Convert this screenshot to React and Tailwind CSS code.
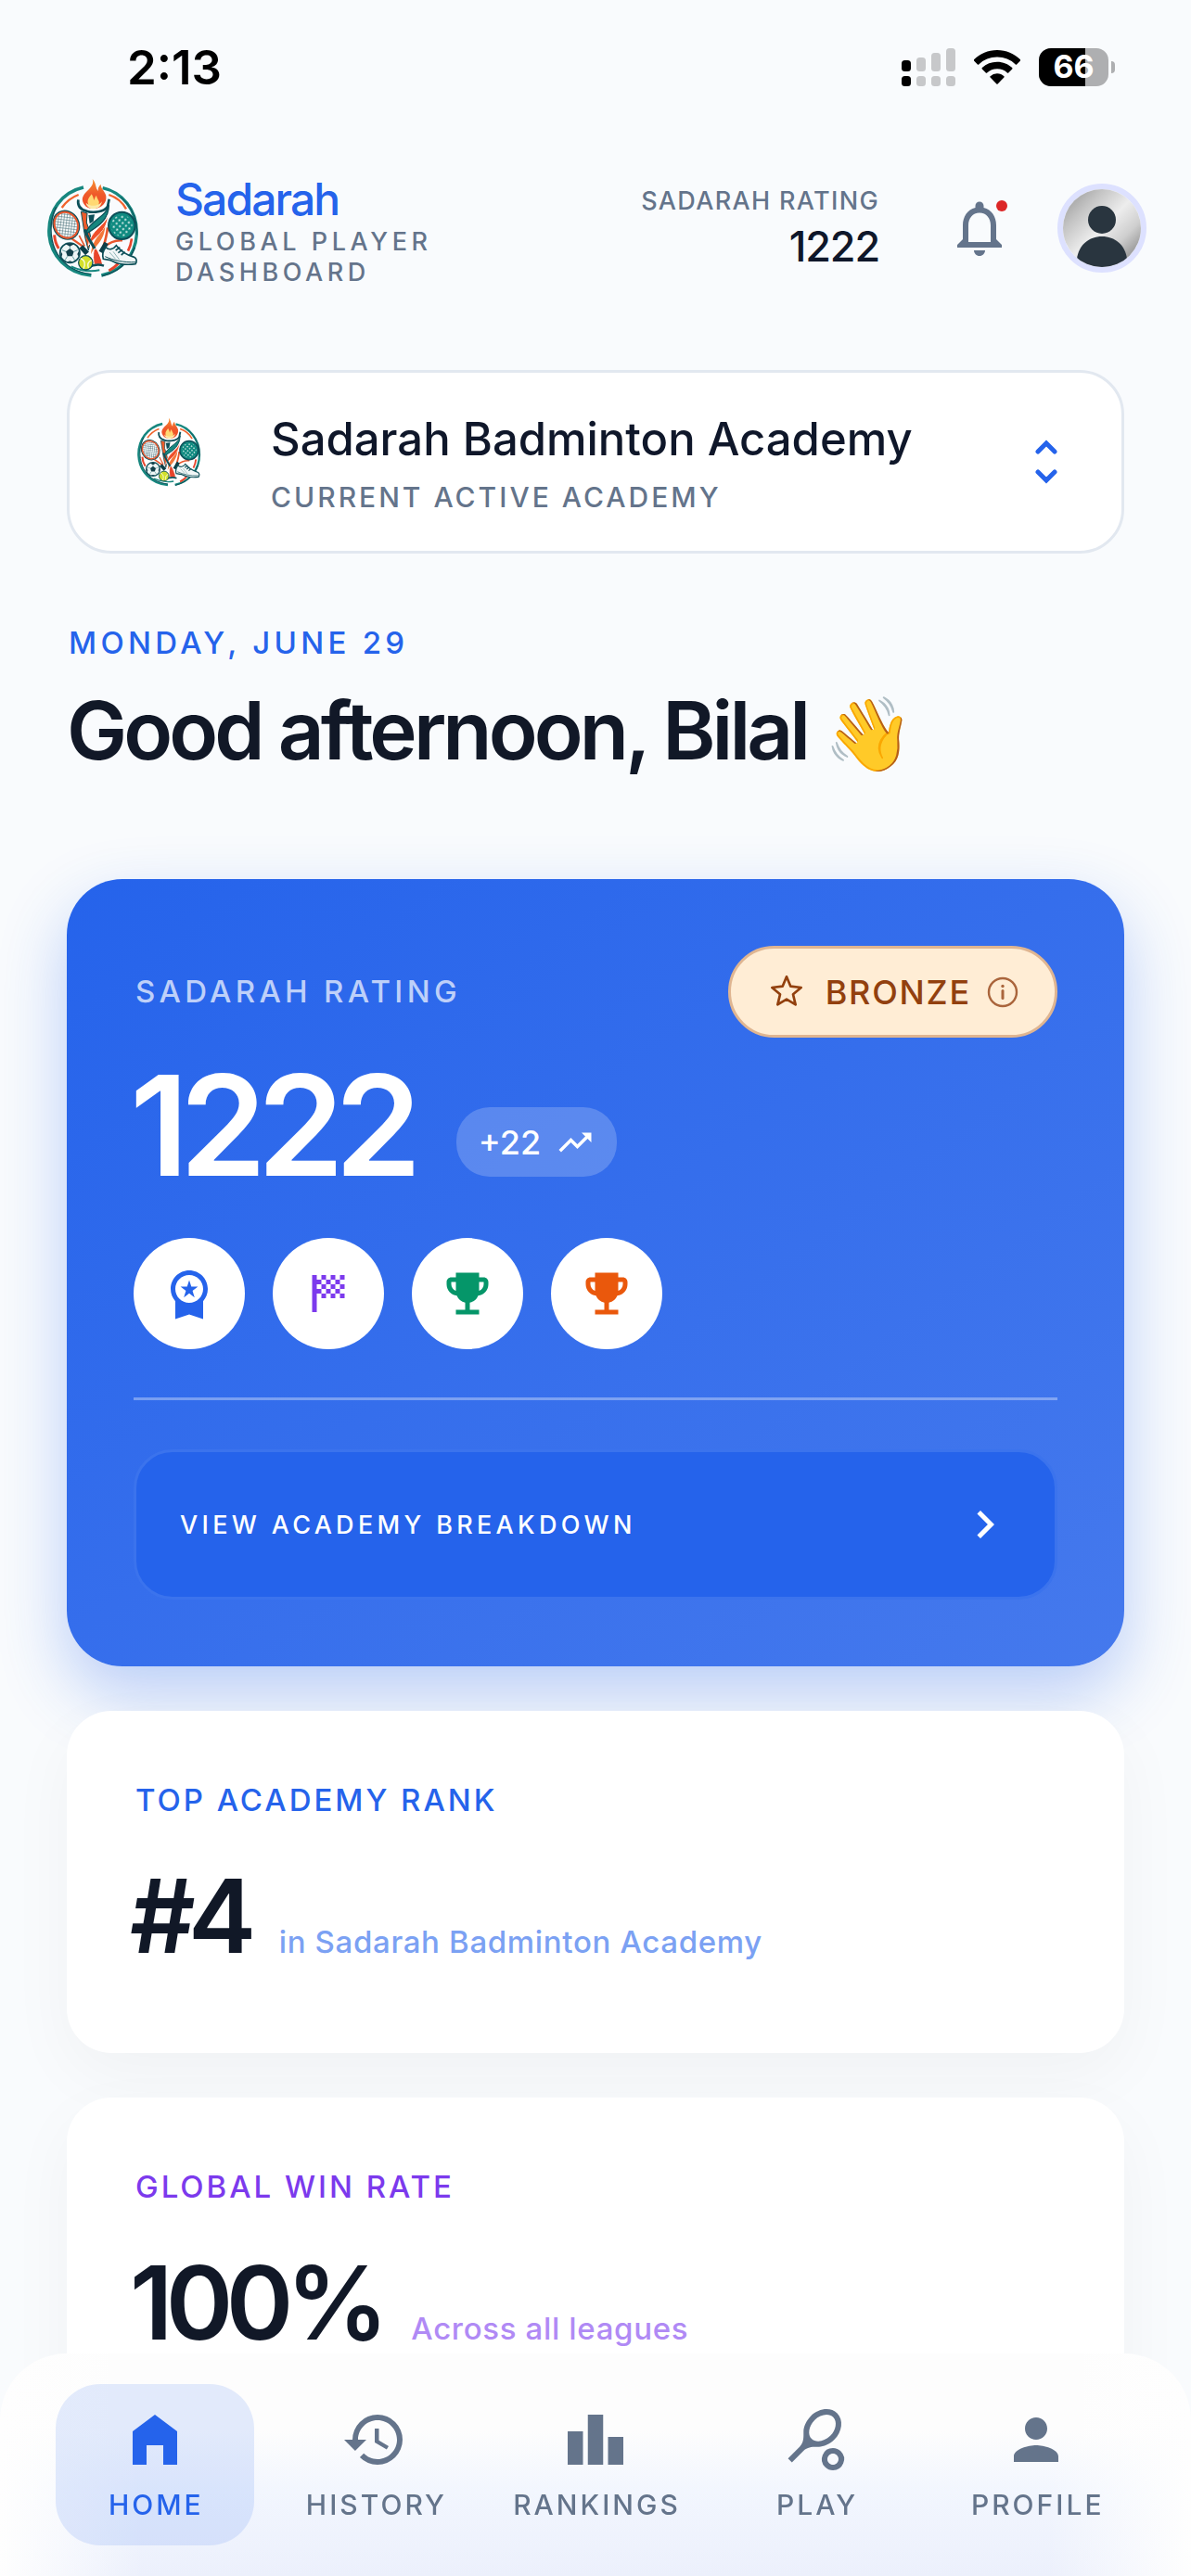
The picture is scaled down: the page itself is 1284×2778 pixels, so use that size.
import React from "react";
import {
  MdChevronRight,
  MdEmojiEvents,
  MdHistory,
  MdLeaderboard,
  MdNotificationsNone,
  MdPerson,
  MdSportsScore,
  MdSportsTennis,
  MdTrendingUp,
} from "react-icons/md";

function ClubLogo({ className, id }) {
  const net = `${id}-net`;
  const dots = `${id}-dots`;
  const flame = `${id}-flame`;
  return (
    <svg viewBox="54 66 324 324" className={className} role="img" aria-label="Sadarah logo">
      <defs>
        <pattern id={net} width="9" height="9" patternUnits="userSpaceOnUse" patternTransform="rotate(35)">
          <rect width="9" height="9" fill="#f7fafa" />
          <path d="M0 0H9M0 0V9" stroke="#3d6670" strokeWidth="3" />
        </pattern>
        <pattern id={dots} width="14" height="14" patternUnits="userSpaceOnUse" patternTransform="rotate(40)">
          <circle cx="7" cy="7" r="3.2" fill="#e9f6f3" />
        </pattern>
        <linearGradient id={flame} x1="0" y1="0" x2="0" y2="1">
          <stop offset="0" stopColor="#f79433" />
          <stop offset="0.5" stopColor="#ef5a2a" />
          <stop offset="1" stopColor="#f04a25" />
        </linearGradient>
      </defs>
      {/* outer rings */}
      <path d="M180 96C110 112 66 172 69 244C72 318 130 376 205 381" fill="none" stroke="#17877f" strokeWidth="11" />
      <path d="M92 160C68 205 70 270 96 312C120 350 160 372 205 377" fill="none" stroke="#0d4f58" strokeWidth="4" />
      <path d="M242 98C306 112 352 170 352 240C352 310 306 366 238 381" fill="none" stroke="#17877f" strokeWidth="10" />
      <path d="M300 128C338 158 356 205 353 250" fill="none" stroke="#0d4f58" strokeWidth="3" />
      <path d="M346 290C328 338 290 370 240 383" fill="none" stroke="#0d4f58" strokeWidth="4" />
      <path d="M110 162C124 142 142 128 164 120" fill="none" stroke="#f0642d" strokeWidth="7" />
      <path d="M262 120C286 128 306 144 318 166" fill="none" stroke="#f0642d" strokeWidth="7" />
      <path d="M86 250C87 268 92 282 100 294" fill="none" stroke="#e8452c" strokeWidth="9" />
      <path d="M336 262C334 278 330 290 324 302" fill="none" stroke="#e8452c" strokeWidth="8" />
      <path d="M262 366C274 360 284 352 292 343" fill="none" stroke="#e8452c" strokeWidth="9" />
      <path d="M140 352C170 366 200 370 232 364" fill="none" stroke="#17877f" strokeWidth="6" />
      {/* torch */}
      <path d="M162 140C158 178 180 182 184 214C187 250 200 280 206 346H240C242 300 246 270 256 240C262 210 268 176 260 140C240 172 186 172 162 140Z" fill="#fff" />
      <path d="M163 136C160 156 170 168 190 173C212 180 246 176 258 158L263 134" fill="none" stroke="#0d4f58" strokeWidth="8" />
      <path d="M172 174L186 262L196 300L204 262L198 232L190 210L192 180Z" fill="#ee5b2b" stroke="#0d4f58" strokeWidth="3" />
      <path d="M196 186L216 184L212 206L200 214Z" fill="#0d4f58" />
      <path d="M262 152C258 190 196 204 187 248C206 232 262 214 262 152Z" fill="#17877f" stroke="#0d4f58" strokeWidth="4" />
      <path d="M260 184C250 222 202 232 196 284C214 258 258 240 260 184Z" fill="#ee4f2b" stroke="#fff" strokeWidth="3" />
      <path d="M250 222C238 248 208 262 204 312C218 284 248 268 250 222Z" fill="#f3773a" />
      <path d="M184 232C196 272 222 288 236 344" fill="none" stroke="#0d4f58" strokeWidth="9" />
      <path d="M214 296C210 316 212 330 214 346H242C238 326 230 308 222 294Z" fill="#e8452c" stroke="#fff" strokeWidth="3" />
      <path d="M194 356C212 346 230 344 246 350" fill="none" stroke="#0d4f58" strokeWidth="7" />
      {/* flame */}
      <path d="M209 69C214 84 207 92 198 102C186 114 172 126 178 143C184 160 200 166 216 165C240 163 256 146 253 124C250 108 236 102 236 86C228 94 226 100 228 108C218 100 222 82 209 69Z" fill={`url(#${flame})`} />
      <path d="M206 118C200 128 192 134 194 146C197 158 206 162 214 161C226 159 232 150 230 142C228 134 222 130 222 122C216 128 216 134 214 138C212 130 210 124 206 118Z" fill="#ffd873" />
      <path d="M188 146C200 158 228 160 240 142C236 160 224 166 212 166C200 166 190 158 188 146Z" fill="#fbe9a8" />
      {/* strung racket */}
      <path d="M142 262L182 290" stroke="#e8562d" strokeWidth="7" />
      <path d="M166 252L184 286" stroke="#e8562d" strokeWidth="5" />
      <path d="M172 288L192 310" stroke="#0d3f48" strokeWidth="16" />
      <ellipse cx="124" cy="218" rx="41" ry="47" fill="#fff" stroke="#0d4f58" strokeWidth="5" transform="rotate(-28 124 218)" />
      <ellipse cx="124" cy="218" rx="37" ry="43" fill={`url(#${net})`} stroke="#e8562d" strokeWidth="6" transform="rotate(-28 124 218)" />
      {/* solid racket */}
      <path d="M258 226C256 250 250 270 244 290" fill="none" stroke="#e8562d" strokeWidth="8" />
      <path d="M306 268C284 266 262 276 246 290" fill="none" stroke="#e8562d" strokeWidth="7" />
      <path d="M254 276L236 306" stroke="#0d3f48" strokeWidth="15" />
      <ellipse cx="304" cy="220" rx="43" ry="44" fill="#0f8a80" stroke="#0d4f58" strokeWidth="6" />
      <ellipse cx="304" cy="220" rx="34" ry="35" fill={`url(#${dots})`} />
      {/* football */}
      <circle cx="136" cy="308" r="32" fill="#eef6f6" stroke="#0d4f58" strokeWidth="5" />
      <path d="M136 294L149 304L144 319H128L123 304Z" fill="#123f4a" />
      <path d="M136 294V282M149 304L161 299M144 319L152 332M128 319L120 332M123 304L111 299" stroke="#6fa4a8" strokeWidth="3" />
      <path d="M122 280L136 287L150 280L136 277ZM106 302L112 312L108 324ZM166 300L160 312L164 322ZM124 338L136 334L148 338Z" fill="#123f4a" />
      {/* tennis ball */}
      <circle cx="187" cy="340" r="23" fill="#d3e02b" stroke="#0d4f58" strokeWidth="4" />
      <path d="M170 326C184 330 188 344 180 360M206 332C196 336 192 346 196 358" fill="none" stroke="#f8fbdc" strokeWidth="4" />
      {/* shoe */}
      <path d="M252 290C262 300 276 298 286 284C298 300 318 314 344 322C352 326 354 336 348 344C322 348 290 344 268 332L244 328C240 314 244 300 252 290Z" fill="#f2f7f7" stroke="#0d4f58" strokeWidth="5" />
      <path d="M250 320C276 332 310 340 348 338" fill="none" stroke="#0d4f58" strokeWidth="3" />
      <path d="M284 300L298 290M292 308L306 298M302 315L314 305" stroke="#0d4f58" strokeWidth="5" />
      <path d="M264 306L284 328M276 304L296 330" stroke="#8fb5b8" strokeWidth="3" />
    </svg>
  );
}

function SignalIcon() {
  return (
    <svg viewBox="0 0 58 41" className="h-[41px] w-[58px]" aria-hidden="true">
      <g fill="#c7c8ca">
        <rect x="16" y="10" width="10" height="15" rx="3.5" />
        <rect x="32" y="5" width="10" height="20" rx="3.5" />
        <rect x="48" y="0" width="10" height="25" rx="3.5" />
        <rect x="16" y="30" width="10" height="11" rx="3.5" />
        <rect x="32" y="30" width="10" height="11" rx="3.5" />
        <rect x="48" y="30" width="10" height="11" rx="3.5" />
      </g>
      <rect x="0" y="13" width="10" height="12" rx="3.5" />
      <rect x="0" y="30" width="10" height="11" rx="3.5" />
    </svg>
  );
}

function WifiIcon() {
  return (
    <svg viewBox="0 0 50 37" className="h-[37px] w-[50px]" aria-hidden="true">
      <path d="M25 0C34.7 0 43.5 3.8 50 10.2a.8.8 0 0 1 0 1.2l-3.9 4a.9.9 0 0 1-1.3 0A28.5 28.5 0 0 0 25 7.6 28.5 28.5 0 0 0 5.2 15.4a.9.9 0 0 1-1.3 0L0 11.4a.8.8 0 0 1 0-1.2C6.5 3.8 15.3 0 25 0Z" />
      <path d="M25 12.7c6.3 0 12 2.4 16.2 6.4a.9.9 0 0 1 0 1.3l-4 4a.9.9 0 0 1-1.3 0A15.7 15.7 0 0 0 25 20.2c-4.2 0-8 1.6-10.9 4.2a.9.9 0 0 1-1.3 0l-4-4a.9.9 0 0 1 0-1.3A23.5 23.5 0 0 1 25 12.7Z" />
      <path d="M25 25.3c2.9 0 5.5 1.1 7.4 2.9.4.4.4.9 0 1.3l-6.8 7a.9.9 0 0 1-1.2 0l-6.8-7a.9.9 0 0 1 0-1.3 10.7 10.7 0 0 1 7.4-2.9Z" />
    </svg>
  );
}

function Battery({ level }) {
  return (
    <div className="flex items-center gap-[3px]" role="img" aria-label={`Battery ${level}%`}>
      <div className="relative h-[41px] w-[75px] overflow-hidden rounded-[13px] bg-[#aeafb1]">
        <div className="h-full bg-black" style={{ width: `${level}%` }} />
        <span className="absolute inset-0 flex items-center justify-center text-[34px] leading-none font-bold text-white">
          {level}
        </span>
      </div>
      <div className="h-[13px] w-1 rounded-r-full bg-[#aeafb1]" />
    </div>
  );
}

function AvatarPicture() {
  return (
    <svg viewBox="0 0 84 84" className="size-full" aria-hidden="true">
      <defs>
        <linearGradient id="avatar-bg" x1="0.1" y1="0.1" x2="0.9" y2="0.9">
          <stop offset="0" stopColor="#a4a4a4" />
          <stop offset="0.2" stopColor="#c4c4c4" />
          <stop offset="0.5" stopColor="#ededed" />
          <stop offset="0.75" stopColor="#cfcfcf" />
          <stop offset="1" stopColor="#8d8d8d" />
        </linearGradient>
        <clipPath id="avatar-clip">
          <circle cx="42" cy="42" r="42" />
        </clipPath>
      </defs>
      <g clipPath="url(#avatar-clip)">
        <rect width="84" height="84" fill="url(#avatar-bg)" />
        <circle cx="42" cy="33" r="15" fill="#29353f" />
        <path d="M15 84V75C17 60 28 51 42 51S67 60 69 75V84Z" fill="#29353f" />
      </g>
    </svg>
  );
}

function UnfoldIcon() {
  return (
    <svg viewBox="0 0 24 24" className="h-24 w-[60px] shrink-0 text-[#2563eb]" fill="none" stroke="currentColor" strokeWidth="2" strokeLinecap="round" strokeLinejoin="miter" aria-hidden="true">
      <path d="M8.4 7.6L12 4l3.6 3.6M8.4 16.4L12 20l3.6-3.6" />
    </svg>
  );
}

function StarIcon() {
  return (
    <svg viewBox="148 129 108 108" className="size-9" fill="none" stroke="currentColor" strokeWidth="8" strokeLinejoin="round" aria-hidden="true">
      <path d="M202 133L215 164L249 168L223 190L231 223L202 206L173 223L181 190L155 168L189 164Z" />
    </svg>
  );
}

function InfoIcon() {
  return (
    <svg viewBox="0 0 36 36" className="size-9 text-[#aa653c]" fill="none" stroke="currentColor" aria-hidden="true">
      <circle cx="18" cy="18" r="15" strokeWidth="2.4" />
      <path d="M18 16.5V24.5" strokeWidth="3" strokeLinecap="round" />
      <circle cx="18" cy="11.5" r="1.7" fill="currentColor" stroke="none" />
    </svg>
  );
}

function MedalIcon({ className }) {
  return (
    <svg viewBox="0 0 24 24" className={className} fill="currentColor" fillRule="evenodd" aria-hidden="true">
      <path d="M20 10c0-4.42-3.58-8-8-8s-8 3.58-8 8c0 2.03.76 3.87 2 5.28V23l6-2 6 2v-7.72c1.24-1.41 2-3.25 2-5.28zM12 4c3.31 0 6 2.69 6 6s-2.69 6-6 6-6-2.69-6-6 2.69-6 6-6z" />
      <path d="M9.68 13.69L12 11.93l2.31 1.76-.88-2.85L15.75 9h-2.84L12 6.19 11.09 9H8.25l2.31 1.84-.88 2.85z" />
    </svg>
  );
}

function HomeIcon({ className }) {
  return (
    <svg viewBox="0 0 24 24" className={className} fill="currentColor" aria-hidden="true">
      <path d="M4 21V9l8-6 8 6v12h-5v-7H9v7H4Z" />
    </svg>
  );
}

const achievements = [
  { label: "Premium player", Icon: MedalIcon, color: "text-[#2563eb]" },
  { label: "Season finisher", Icon: MdSportsScore, color: "text-[#7c3aed]" },
  { label: "League trophy", Icon: MdEmojiEvents, color: "text-[#059669]" },
  { label: "Cup trophy", Icon: MdEmojiEvents, color: "text-[#ea580c]" },
];

const stats = [
  { title: "TOP ACADEMY RANK", value: "#4", note: "in Sadarah Badminton Academy", titleColor: "text-[#2563eb]", noteColor: "text-[#7ba1f3]" },
  { title: "GLOBAL WIN RATE", value: "100%", note: "Across all leagues", titleColor: "text-[#7c3aed]", noteColor: "text-[#b08af5]" },
];

const tabs = [
  { label: "HOME", Icon: HomeIcon, active: true },
  { label: "HISTORY", Icon: MdHistory },
  { label: "RANKINGS", Icon: MdLeaderboard },
  { label: "PLAY", Icon: MdSportsTennis },
  { label: "PROFILE", Icon: MdPerson },
];

function StatusBar() {
  return (
    <div className="flex h-36 items-center justify-between pr-[82px] pl-[137px] text-black">
      <span className="text-[51px] leading-none font-semibold">2:13</span>
      <div className="flex items-center gap-5">
        <SignalIcon />
        <WifiIcon />
        <Battery level={66} />
      </div>
    </div>
  );
}

function Header() {
  return (
    <header className="flex h-[204px] items-center px-12">
      <ClubLogo id="header" className="size-[108px] shrink-0" />
      <div className="ml-[33px] w-[300px] pt-1">
        <p className="text-[48px] leading-[58px] font-medium tracking-[-0.04em] text-[#2563eb]">Sadarah</p>
        <p className="text-[27px] leading-[33px] font-medium tracking-[0.17em] text-[#64748b]">GLOBAL PLAYER DASHBOARD</p>
      </div>
      <div className="mr-[72px] ml-auto text-right">
        <p className="text-[27px] leading-10 font-medium tracking-[0.05em] text-[#64748b]">SADARAH RATING</p>
        <p className="text-[45px] leading-[58px] font-medium tracking-tight text-[#0f172a]">1222</p>
      </div>
      <button type="button" aria-label="Notifications" className="relative size-[72px] text-[#64748b]">
        <MdNotificationsNone className="size-[72px]" />
        <span className="absolute top-[6px] left-[54px] size-3 rounded-full bg-[#dc2626]" />
      </button>
      <button type="button" aria-label="Your profile" className="ml-12 size-24 rounded-full border-6 border-[#dde1ff]">
        <AvatarPicture />
      </button>
    </header>
  );
}

function RatingCard() {
  return (
    <section className="rounded-[60px] bg-linear-to-br from-[#2563eb] to-[#4579ed] p-[72px] shadow-[0_30px_72px_rgba(37,99,235,0.3)]">
      <div className="flex items-center justify-between">
        <h2 className="pl-0.5 text-[33px] leading-none font-medium tracking-[0.13em] text-[#bed0f9]">SADARAH RATING</h2>
        <button type="button" className="flex h-[99px] items-center rounded-full border-3 border-[#dfb591] bg-[#ffedd5] pr-[38px] pl-[42px] text-[#92400e]">
          <StarIcon />
          <span className="mr-4 ml-6 text-[36px] leading-none font-medium tracking-wider">BRONZE</span>
          <InfoIcon />
        </button>
      </div>
      <div className="mt-10 -ml-1 flex items-end gap-[47px] text-white">
        <span className="text-[150px] leading-[110px] font-semibold tracking-[-0.065em]">1222</span>
        <span className="flex h-[75px] items-center gap-4 rounded-[36px] bg-white/20 px-6 text-[36px] leading-none font-medium">
          +22
          <MdTrendingUp className="size-[42px]" />
        </span>
      </div>
      <ul className="mt-[66px] flex gap-[30px]">
        {achievements.map(({ label, Icon, color }) => (
          <li key={label} aria-label={label} className={`flex size-[120px] items-center justify-center rounded-full bg-white ${color}`}>
            <Icon className="size-[60px]" />
          </li>
        ))}
      </ul>
      <hr className="mt-[52px] border-t-3 border-white/35" />
      <button type="button" className="mt-[53px] flex h-[162px] w-full items-center justify-between rounded-[42px] border-3 border-[#3b73ed] bg-[#2563eb] pr-[45px] pl-[47px] text-white">
        <span className="text-[27px] leading-none font-medium tracking-[0.16em]">VIEW ACADEMY BREAKDOWN</span>
        <MdChevronRight className="size-[60px]" />
      </button>
    </section>
  );
}

function StatCard({ title, value, note, titleColor, noteColor }) {
  return (
    <section className="rounded-[48px] bg-white px-[72px] pt-[72px] pb-[92px] shadow-[0_24px_72px_rgba(0,0,0,0.04)]">
      <h2 className={`pl-0.5 text-[33px] leading-[48px] font-medium tracking-[0.09em] ${titleColor}`}>{title}</h2>
      <p className="mt-[45px] -ml-1 flex items-baseline gap-8">
        <span className="text-[110px] leading-[112px] font-semibold tracking-[-0.07em] text-[#111827]">{value}</span>
        <span className={`text-[33px] leading-none font-medium tracking-[0.02em] ${noteColor}`}>{note}</span>
      </p>
    </section>
  );
}

function TabBar() {
  return (
    <nav className="fixed inset-x-0 bottom-0 grid grid-cols-5 rounded-t-[72px] bg-[linear-gradient(90deg,#fefefe,rgba(254,254,254,0)_12%,rgba(254,254,254,0)_88%,#fefefe),linear-gradient(180deg,#fdfdfd_0%,#fdfdfd_35%,#f2f6fe_62%,#ecf0fc_100%)] px-12 py-[33px]">
      {tabs.map(({ label, Icon, active }) => (
        <a
          key={label}
          href={`#${label.toLowerCase()}`}
          aria-current={active ? "page" : undefined}
          className={`mx-3 flex h-[174px] flex-col items-center gap-4 rounded-[48px] pt-6 ${active ? "bg-[#2563eb]/12 text-[#2563eb]" : "text-[#64748b]"}`}
        >
          <Icon className="size-[72px]" />
          <span className="pl-[3px] text-[30px] leading-9 font-medium tracking-widest">{label}</span>
        </a>
      ))}
    </nav>
  );
}

export default function App() {
  return (
    <div className="h-screen overflow-y-auto bg-[#f9fbfd] font-['Inter',sans-serif] [scrollbar-width:none]">
      <StatusBar />
      <Header />
      <main className="px-[72px] pt-[51px] pb-72">
        <button type="button" className="flex w-full items-start rounded-[48px] border-3 border-[#e2e8f0] bg-white pt-12 pr-[51px] pb-10 pl-[71px] text-left">
          <ClubLogo id="academy" className="size-[75px] shrink-0" />
          <span className="ml-[71px] flex grow flex-col gap-5">
            <span className="text-[49px] leading-[48px] font-medium text-[#0f172a]">Sadarah Badminton Academy</span>
            <span className="text-[30px] leading-9 font-medium tracking-widest text-[#64748b]">CURRENT ACTIVE ACADEMY</span>
          </span>
          <UnfoldIcon />
        </button>

        <p className="mt-[75px] pl-0.5 text-[33px] leading-[42px] font-medium tracking-[0.13em] text-[#2563eb]">MONDAY, JUNE 29</p>
        <h1 className="mt-5 mb-[106px] text-[87px] leading-[108px] font-semibold tracking-[-0.045em] text-[#111827]">
          Good afternoon, Bilal <span className="text-[78px] leading-none">👋</span>
        </h1>

        <div className="flex flex-col gap-12">
          <RatingCard />
          {stats.map((stat) => (
            <StatCard key={stat.title} {...stat} />
          ))}
        </div>
      </main>
      <TabBar />
    </div>
  );
}
